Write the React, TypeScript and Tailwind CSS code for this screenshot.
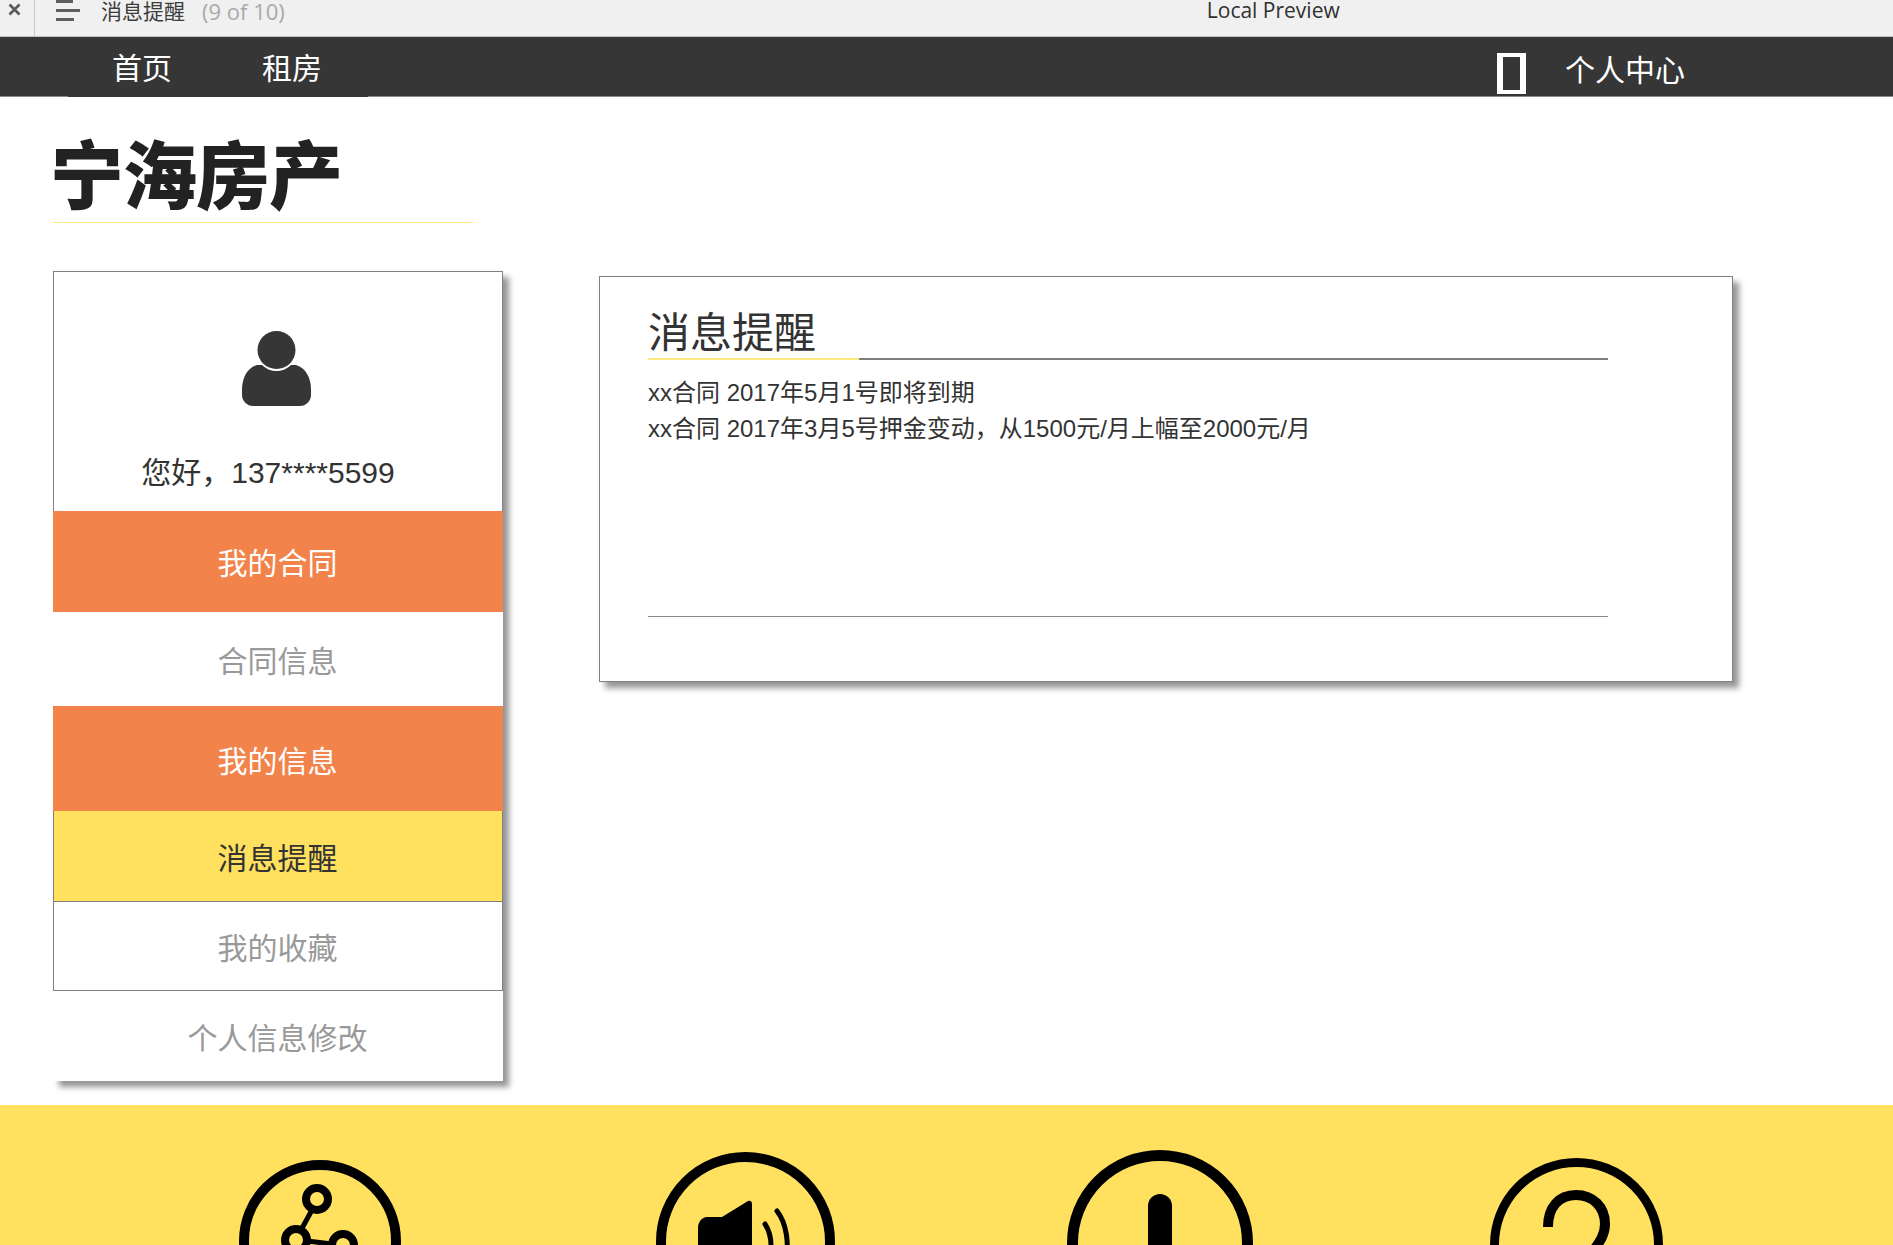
const cjk = "font-['Liberation_Sans','Noto_Sans_CJK_SC',sans-serif]";

function ShareIcon() {
  return (
    <svg width="162" height="162" viewBox="0 0 162 162" fill="none" stroke="#000" className="mt-[55px] ml-[239px] shrink-0">
      <circle cx="81" cy="81" r="76" strokeWidth="10" />
      <circle cx="78" cy="39" r="11" strokeWidth="8" />
      <circle cx="57" cy="80" r="11" strokeWidth="8" />
      <circle cx="104" cy="85" r="11" strokeWidth="8" />
      <path d="M73 50 62 70M68 81l25 3" strokeWidth="5" />
    </svg>
  );
}

function SpeakerIcon() {
  return (
    <svg width="179" height="179" viewBox="0 0 179 179" fill="none" stroke="#000" className="mt-[47px] ml-[255px] shrink-0">
      <circle cx="89.5" cy="89.5" r="84.5" strokeWidth="10" />
      <path d="M66 65H51C46 65 42 70 42 76v44h54V52c0-3-2-4-4-3z" fill="#000" stroke="none" />
      <path d="M109 72c6 9 7 22 5 34" strokeWidth="5" strokeLinecap="round" />
      <path d="M121 59c10 13 12 33 9 50" strokeWidth="5" strokeLinecap="round" />
    </svg>
  );
}

function AlertIcon() {
  return (
    <svg width="186" height="186" viewBox="0 0 186 186" fill="none" stroke="#000" className="mt-[45px] ml-[232px] shrink-0">
      <circle cx="93" cy="93" r="87.5" strokeWidth="11" />
      <rect x="81" y="44" width="24" height="90" rx="12" fill="#000" stroke="none" />
    </svg>
  );
}

function HelpIcon() {
  return (
    <svg width="173" height="173" viewBox="0 0 173 173" fill="none" stroke="#000" className="mt-[53px] ml-[237px] shrink-0">
      <circle cx="86.5" cy="86.5" r="82" strokeWidth="9" />
      <path d="M58 69c0-20 11-32 28-32s29 12 29 29c0 12-7 20-14 30l-14 22" strokeWidth="10" />
    </svg>
  );
}

function UserIcon() {
  return (
    <svg width="69" height="75" viewBox="0 0 69 75" className="mr-[3px] block">
      <path d="M15 34C5 37 0 47 0 59v5c0 6 5 11 11 11h47c6 0 11-5 11-11v-5c0-12-5-22-15-25z" fill="#363636" />
      <circle cx="34.5" cy="19" r="21" fill="#fff" />
      <circle cx="34.5" cy="19" r="19" fill="#363636" />
    </svg>
  );
}

function Toolbar() {
  return (
    <div className="flex h-[37px] items-start border-b border-[#c4c4c4] bg-[#f0f0f0] font-['Open_Sans','Noto_Sans_CJK_SC',sans-serif]">
      <div className="flex h-full w-[35px] shrink-0 items-start justify-center border-r border-[#c8c8c8] pt-[3px] pr-[6px]">
        <svg width="13" height="13" viewBox="0 0 13 13" fill="none" stroke="#5a5a5a" strokeWidth="2.6">
          <path d="M1.5 1.5 11.5 11.5M11.5 1.5 1.5 11.5" />
        </svg>
      </div>
      <div className="ml-[21px] flex w-[24px] shrink-0 flex-col items-start gap-[6px]">
        <div className="h-[3px] w-[17px] bg-[#5f5f5f]" />
        <div className="h-[3px] w-[24px] bg-[#5f5f5f]" />
        <div className="h-[3px] w-[18px] bg-[#5f5f5f]" />
      </div>
      <div className="ml-[21px] text-[21px] leading-[22px] text-[#3c3c3c]">消息提醒</div>
      <div className="ml-[17px] text-[22px] leading-[22px] text-[#a9a9a9]">(9 of 10)</div>
      <div className="ml-[922px] text-[21px] leading-[20px] text-[#303030]">Local Preview</div>
    </div>
  );
}

function Nav() {
  return (
    <div className={`flex h-[60px] items-center border-b border-[#8a8a8a] bg-[#363636] text-[30px] text-white ${cjk}`}>
      <div className="ml-[68px] -mb-px flex h-[60px] w-[300px] items-center bg-[#363636] pt-[2px] pl-[44px]">
        <span>首页</span>
        <span className="ml-[90px]">租房</span>
      </div>
      <div className="ml-[1129px] h-[41px] w-[29px] shrink-0 translate-y-[7px] border-x-[6px] border-y-[4px] border-white" />
      <span className="ml-[39px] translate-y-[4px]">个人中心</span>
    </div>
  );
}

function Sidebar() {
  return (
    <div className={`w-[450px] shrink-0 bg-white text-center text-[30px] text-[#999999] shadow-[6px_6px_6px_rgba(0,0,0,0.42)] ${cjk}`}>
      <div className="flex h-[240px] flex-col items-center border-x border-t border-[#808080] pt-[59px]">
        <UserIcon />
        <div className="mt-[47px] mr-[20px] leading-[40px] text-[#333333]">您好，137****5599</div>
      </div>
      <div className="flex h-[101px] items-center justify-center bg-[#f1834b] pt-[3px] pr-[1px] text-white">我的合同</div>
      <div className="flex h-[94px] items-center justify-center pt-[4px] pr-[1px]">合同信息</div>
      <div className="flex h-[105px] items-center justify-center bg-[#f1834b] pt-[5px] pr-[1px] text-white">我的信息</div>
      <div className="flex h-[91px] items-center justify-center border-x border-b border-[#808080] bg-[#ffe15f] pt-[4px] pr-[1px] text-[#333333]">消息提醒</div>
      <div className="flex h-[89px] items-center justify-center border-x border-b border-[#808080] pt-[4px] pr-[1px]">我的收藏</div>
      <div className="flex h-[90px] items-center justify-center pt-[4px] pr-[1px]">个人信息修改</div>
    </div>
  );
}

function MessagePanel() {
  return (
    <div className={`mt-[5px] ml-[96px] h-[406px] w-[1134px] shrink-0 border border-[#808080] bg-white pt-[28px] pl-[48px] text-[#333333] shadow-[6px_6px_6px_rgba(0,0,0,0.42)] ${cjk}`}>
      <div className="w-[960px]">
        <div className="h-[53px] text-[42px] leading-[57px]">消息提醒</div>
        <div className="flex h-[2px] bg-[#808080]">
          <div className="w-[211px] bg-[#ffe97f]" />
        </div>
        <div className="mt-[15px] h-[242px] border-b border-[#8c8c8c] text-[24px] leading-[36px]">
          <p>xx合同 2017年5月1号即将到期</p>
          <p>xx合同 2017年3月5号押金变动，从1500元/月上幅至2000元/月</p>
        </div>
      </div>
    </div>
  );
}

export default function App() {
  return (
    <div className="h-[1245px] overflow-hidden bg-white">
      <Toolbar />
      <Nav />
      <div className="px-[53px]">
        <div className={`h-[126px] w-[420px] border-b border-[#ffe97f] pt-[36px] text-[74px] leading-[90px] font-black tracking-[-1px] text-[#222222] ${cjk}`}>
          <span className="-ml-[3px] block">宁海房产</span>
        </div>
        <div className="mt-[48px] flex items-start">
          <Sidebar />
          <MessagePanel />
        </div>
      </div>
      <div className="mt-[24px] flex h-[140px] items-start overflow-hidden bg-[#ffe15f]">
        <ShareIcon />
        <SpeakerIcon />
        <AlertIcon />
        <HelpIcon />
      </div>
    </div>
  );
}
